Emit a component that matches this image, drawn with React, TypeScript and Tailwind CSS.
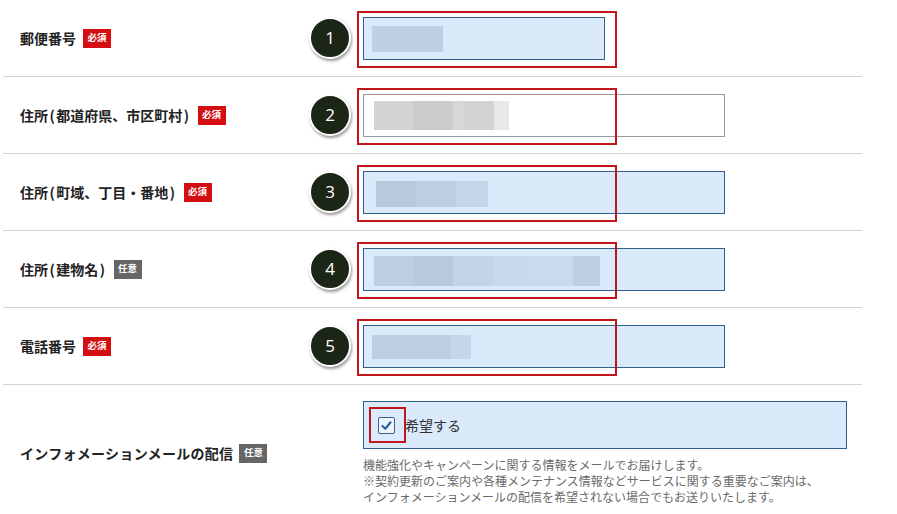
import React from "react";

type Seg = { w: number; c: string };

type Field = {
  label: string;
  required: boolean;
  num: number;
  width: number;
  filled: boolean;
  blur: { left: number; top: number; h: number; segs: Seg[] };
};

const fields: Field[] = [
  {
    label: "郵便番号",
    required: true,
    num: 1,
    width: 242,
    filled: true,
    blur: { left: 8, top: 8, h: 26, segs: [{ w: 71, c: "#bfd0e2" }] },
  },
  {
    label: "住所(都道府県、市区町村)",
    required: true,
    num: 2,
    width: 362,
    filled: false,
    blur: {
      left: 10,
      top: 6,
      h: 29,
      segs: [
        { w: 39, c: "#d4d4d4" },
        { w: 40, c: "#cbcbcb" },
        { w: 11, c: "#d7d7d7" },
        { w: 30, c: "#d3d3d3" },
        { w: 15, c: "#e8e8e8" },
      ],
    },
  },
  {
    label: "住所(町域、丁目・番地)",
    required: true,
    num: 3,
    width: 362,
    filled: true,
    blur: {
      left: 12,
      top: 9,
      h: 26,
      segs: [
        { w: 40, c: "#b9c9db" },
        { w: 40, c: "#bdcee1" },
        { w: 32, c: "#c5d5e7" },
      ],
    },
  },
  {
    label: "住所(建物名)",
    required: false,
    num: 4,
    width: 362,
    filled: true,
    blur: {
      left: 10,
      top: 7,
      h: 30,
      segs: [
        { w: 39, c: "#bdcee0" },
        { w: 40, c: "#b8c9dc" },
        { w: 40, c: "#c3d4e7" },
        { w: 36, c: "#c9d9eb" },
        { w: 44, c: "#cadaec" },
        { w: 27, c: "#bdcee1" },
      ],
    },
  },
  {
    label: "電話番号",
    required: true,
    num: 5,
    width: 362,
    filled: true,
    blur: {
      left: 8,
      top: 9,
      h: 24,
      segs: [
        { w: 79, c: "#bdcee1" },
        { w: 20, c: "#c7d7e9" },
      ],
    },
  },
];

// parentheses in the original font sit a bit wider than Noto's
function Label({ text }: { text: string }) {
  const parts = text.split(/([()])/);
  return (
    <span className="text-[14px] font-bold text-[#222]">
      {parts.map((p, i) =>
        p === "(" || p === ")" ? (
          <span key={i} className="mx-[1.5px]">
            {p}
          </span>
        ) : (
          p
        )
      )}
    </span>
  );
}

function Badge({ required }: { required: boolean }) {
  return (
    <span
      className={`inline-flex h-[19px] w-[28px] items-center justify-center text-[9.5px] font-bold leading-none text-white ${
        required ? "bg-[#d40f12]" : "bg-[#666666]"
      }`}
    >
      {required ? "必須" : "任意"}
    </span>
  );
}

function Circle({ n }: { n: number }) {
  return (
    <div className="flex h-[42px] w-[42px] shrink-0 items-center justify-center rounded-full border-2 border-white bg-[#1b2617] text-[17px] text-white shadow-[1px_2px_3px_rgba(0,0,0,0.4)] [font-family:'Open_Sans','Liberation_Sans',sans-serif]">
      {n}
    </div>
  );
}

function FieldRow({ f }: { f: Field }) {
  return (
    <div className="flex h-[77px] items-center border-b border-[#d3d3d3]">
      <div className="flex w-[306px] shrink-0 items-center gap-[7px] pl-[17px]">
        <Label text={f.label} />
        <Badge required={f.required} />
      </div>
      <Circle n={f.num} />
      <div
        className={`relative ml-[12px] h-[43px] border ${
          f.filled
            ? "border-[#2f5f8e] bg-[#daeafb]"
            : "border-[#9a9a9a] bg-white"
        }`}
        style={{ width: f.width }}
      >
        <div
          className="absolute flex"
          style={{ left: f.blur.left, top: f.blur.top, height: f.blur.h }}
        >
          {f.blur.segs.map((s, i) => (
            <div key={i} style={{ width: s.w, background: s.c }} />
          ))}
        </div>
        <div className="pointer-events-none absolute -top-[7px] -left-[7px] h-[57px] w-[260px] border-2 border-[#c2141b]" />
      </div>
    </div>
  );
}

export default function App() {
  return (
    <div className="h-[514px] w-[897px] overflow-hidden bg-white [font-family:'Noto_Sans_CJK_JP',sans-serif]">
      <div className="ml-[3px] w-[859px]">
        {fields.map((f) => (
          <FieldRow key={f.num} f={f} />
        ))}

        <div className="flex items-center pt-[16px]">
          <div className="flex w-[360px] shrink-0 items-center gap-[6px] pl-[17px]">
            <span className="text-[14px] font-bold tracking-[0.3px] text-[#222]">
              インフォメーションメールの配信
            </span>
            <Badge required={false} />
          </div>
          <div>
            <div className="flex h-[48px] w-[484px] items-center border border-[#2f5f8e] bg-[#daeafb] pl-[14px]">
              <div className="relative flex h-[17px] w-[17px] items-center justify-center rounded-[2px] border border-[#3b5f86] bg-[#eef5fc]">
                <svg viewBox="0 0 16 16" className="h-[13px] w-[13px]">
                  <path
                    d="M3 8.5 L6.5 12 L13 4"
                    fill="none"
                    stroke="#2a5ea8"
                    strokeWidth="2.6"
                    strokeLinecap="round"
                    strokeLinejoin="round"
                  />
                </svg>
                <div className="pointer-events-none absolute -top-[11px] -left-[10px] h-[36px] w-[37px] border-2 border-[#c2141b]" />
              </div>
              <span className="ml-[10px] text-[14px] text-[#333]">希望する</span>
            </div>
            <p className="mt-[8px] text-[12px] leading-[16px] text-[#6a6a6a]">
              機能強化やキャンペーンに関する情報をメールでお届けします。
              <br />
              ※契約更新のご案内や各種メンテナンス情報などサービスに関する重要なご案内は、
              <br />
              インフォメーションメールの配信を希望されない場合でもお送りいたします。
            </p>
          </div>
        </div>
      </div>
    </div>
  );
}
